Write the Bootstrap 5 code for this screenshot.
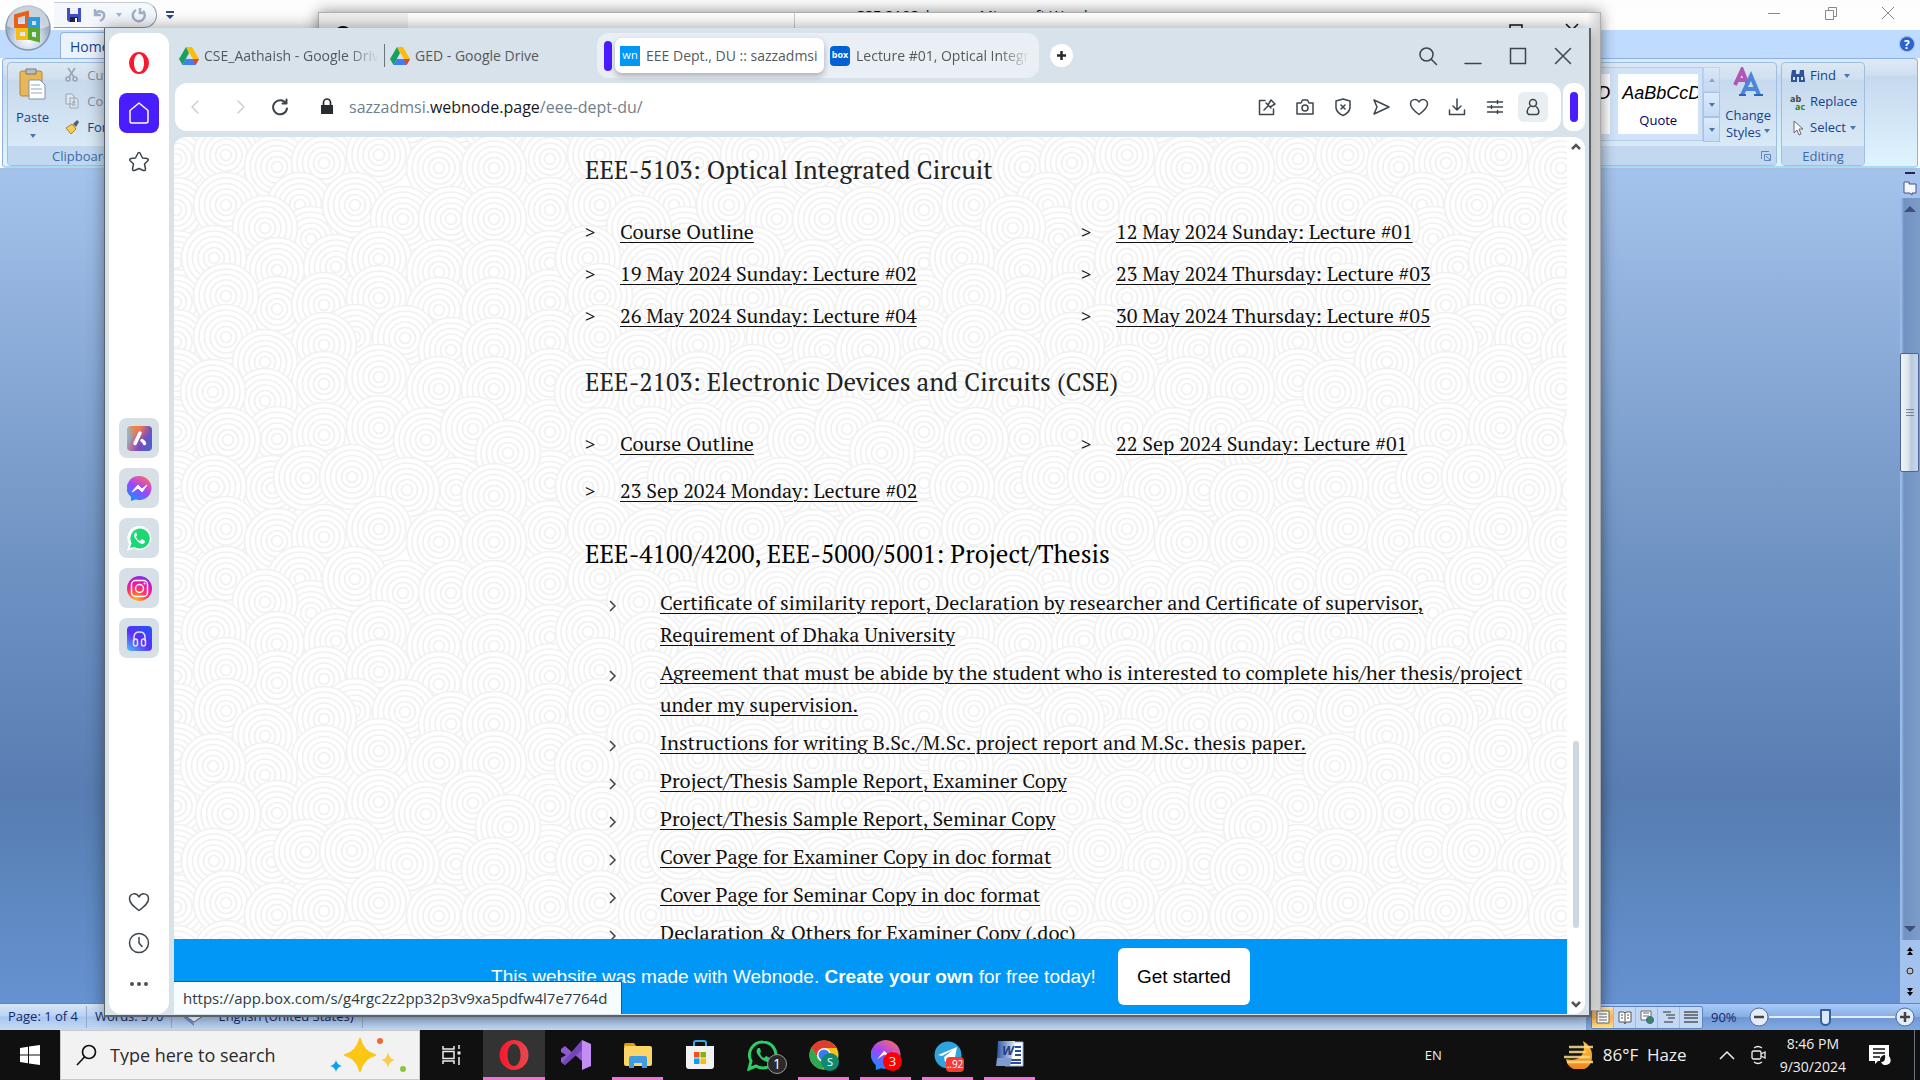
<!DOCTYPE html>
<html lang="en">
<head>
<meta charset="utf-8">
<meta name="viewport" content="width=device-width, initial-scale=1">
<title>EEE Dept., DU :: sazzadmsi</title>
<link href="https://cdn.jsdelivr.net/npm/bootstrap@5.3.0/dist/css/bootstrap.min.css" rel="stylesheet">
<style>
html, body { height: 100%; overflow: hidden; }
body { font-family: "Open Sans", "Noto Sans", sans-serif; font-size: 14px; line-height: 20px; background: #000; }
button, a { color: inherit; }
button { border: 0; background: none; padding: 0; font: inherit; }
svg { display: block; flex: none; }
.ui-svg { fill: none; stroke: #3d464d; stroke-width: 1.5; stroke-linecap: round; stroke-linejoin: round; }
.desktop { min-height: 0; }

/* Word window */
.wordwin { inset: 0; background: #fff; }
.w-title { height: 30px; background: linear-gradient(#fdfdfd, #fff); }
.w-doc { left: 855px; top: 5px; font-size: 15px; color: #111; white-space: nowrap; }
.qat { border: 1px solid #8e98a8; border-left: 0; border-top-color: #c5ccd6; border-radius: 0 14px 14px 0; height: 26px; width: 103px; margin: 2px 0 0 54px; background: #f4f7fb; padding-left: 8px; gap: 9px; }
.orb { left: 4px; top: 4px; }
.w-ctl { gap: 43px; padding-right: 25px; }
.w-tabs { height: 28px; background: #bfdbff; }
.w-tab { margin-left: 60px; margin-top: 2px; width: 70px; height: 27px; background: #eaf2fd; border: 1px solid #8db2e3; border-bottom: 0; border-radius: 4px 4px 0 0; color: #15428b; padding: 4px 0 0 9px; }
.ribbon { height: 110px; margin: 0 2px; border: 1px solid #8db2e3; border-bottom: 2px solid #a5dcf5; border-radius: 4px; background: linear-gradient(#dfeaf7 0, #d0dff0 16px, #c6d8ee 17px, #e0f4ff 100%); color: #15428b; font-size: 13px; line-height: 17px; }
.rgroup { height: 104px; margin-top: 3px; border: 1px solid #9dbfe2; border-radius: 4px; background: linear-gradient(#dce7f3 0, #d0dfef 16px, #c7d9ed 17px, #d9e9f6 84px); overflow: hidden; white-space: nowrap; }
.rbody { height: 83px; flex: none; }
.rlabel { height: 19px; line-height: 20px; flex: none; background: #c1d8f0; color: #3e6aaa; text-align: center; }
.dim { color: #8a8d91; }
.gal { height: 74px; background: #d0e2f7; border: 1px solid #b6cde9; }
.galcell { width: 80px; height: 60px; background: #fff; overflow: hidden; color: #000060; }
.galcell i { font: italic 18px/38px "Liberation Sans", Arial, sans-serif; color: #000; white-space: nowrap; }
.galbtn { height: 25px; width: 17px; border: 1px solid #a9c4e8; background: linear-gradient(#dceafb, #c4daf5); }
.tri { width: 0; height: 0; border: 3px solid transparent; border-top: 4px solid #4a77b4; border-bottom: 0; display: inline-block; }
.w-space { background: linear-gradient(#a4c3ec 0, #9bbae4 8%, #7094c4 45%, #587db2 75%, #5b85bb 84%, #6692d2 100%); border-top: 2px solid #a9bfdd; min-height: 0; }
.w-scroll { width: 20px; background: #a4c2ee; }
.w-track { background: linear-gradient(90deg, #9dbdeb 1px, #7193c2 4px, #7c9cc8); }
.w-thumb { left: 0; right: 1px; top: 155px; height: 119px; border: 1px solid #4c6598; border-radius: 2px; background: linear-gradient(90deg, #f2f5f8, #dfe6ee 40%, #b9c9dd 60%, #c9d7ea); }
.w-status { height: 27px; border-top: 1px solid #5d87c4; background: linear-gradient(#d9e6f6, #b9d3f4 45%, #a8c5ee 50%, #c5dbf5); color: #15286b; font-size: 13px; }
.w-status .seg { border-right: 1px solid #8fa9cf; height: 22px; }
.w-zoom { background: linear-gradient(#a9cbfa, #88aee6 48%, #6f97d4 52%, #83a9e0); border-left: 1px solid #7c9bc8; width: 334px; }
.views { border: 1px solid #5e84bd; border-radius: 2px; height: 23px; background: #c3d8f5; }
.views button { width: 22px; height: 21px; border-right: 1px solid #9fbce6; display: flex; align-items: center; justify-content: center; }
.views .on { background: linear-gradient(#ffe5a8, #fbb04a 50%, #ffe08c); }
.zoomline input { width: 126px; height: 20px; appearance: none; background: linear-gradient(#e3eefc, #e3eefc) center / 100% 2px no-repeat; margin: 0; }
.zoomline input::-webkit-slider-thumb { appearance: none; width: 11px; height: 17px; background: #dbe8fa; border: 2px solid #365f9e; border-radius: 1px 1px 6px 6px; }

/* window behind the browser */
.backwin { left: 318px; right: 319px; top: 12px; bottom: 19px; background: linear-gradient(90deg, #fff 99%, #d8d8d8); border: 1px solid #b0b0b0; box-shadow: 0 0 14px rgba(0,0,0,.45); overflow: hidden; }

/* browser */
.browser { left: 104px; right: 329px; top: 28px; bottom: 13px; background: #d8e2ea; border: solid #5c6268; border-width: 0 2px 2px 1px; box-shadow: 0 0 16px rgba(0,0,0,.4); padding: 5px 4px 1px 4px; }
.side { width: 60px; background: #fff; border-radius: 12px; padding: 18px 0 20px; }
.side .homebtn { width: 40px; height: 40px; border-radius: 8px; background: #4a1dff; }
.side .appbtn { width: 40px; height: 40px; border-radius: 8px; background: #d6e0e6; }
.tabbar { height: 50px; margin-left: 5px; color: #55595d; font-size: 14px; }
.tab-t { overflow: hidden; white-space: nowrap; }
.fade-r { -webkit-mask-image: linear-gradient(90deg, #000 82%, transparent); mask-image: linear-gradient(90deg, #000 82%, transparent); }
.tgroup { height: 45px; width: 442px; border-radius: 12px; background: #e9eff4; padding-left: 7px; margin-left: 52px; }
.purple { width: 8px; height: 30px; border-radius: 4px; background: #4a1dff; }
.tactive { width: 209px; height: 35px; margin-left: 3px; border-radius: 7px; background: #fff; box-shadow: 0 3px 6px rgba(0,0,0,.28); padding-left: 5px; gap: 6px; }
.fav { width: 20px; height: 20px; color: #fff; font-size: 11px; line-height: 18px; text-align: center; flex: none; }
.toolrow { height: 48px; margin-left: 6px; gap: 2px; }
.addr { background: #fff; border-radius: 12px; padding: 0 13px 0 11px; }
.url { font-size: 16px; color: #6f7f8c; }
.url b { font-weight: 400; color: #16191c; }
.acts { gap: 16px; }
.acts button { width: 22px; height: 30px; display: flex; align-items: center; justify-content: center; }
.acts .prof { width: 30px; background: #e9eef1; border-radius: 6px; margin-left: -4px; }
.pill { width: 22px; background: #fff; border-radius: 9px; }
.view { margin: 6px 0 0 5px; border-radius: 12px 12px 12px 0; background: #fff; overflow: hidden; min-height: 0; }
.site { min-width: 0; overflow: hidden; }
.rings { inset: 0; width: 100%; height: 100%; }
.doc { font-family: "PT Serif", "Liberation Serif", serif; font-size: 20px; line-height: 32px; color: #111; padding: 15px 40px 0 411px; position: relative; }
.doc h2 { font-size: 25px; line-height: 36px; font-weight: 400; color: #222; margin: 0 0 28px; }
.doc a { text-decoration: underline; text-decoration-thickness: 1px; text-underline-offset: 3px; color: #111; }
.doc .cols { --bs-gutter-x: 50px; row-gap: 10px; margin-bottom: 32px; }
.doc .cols.wide { row-gap: 15px; margin-bottom: 29px; }
.doc .cols > div { display: flex; }
.doc .gt { width: 35px; flex: none; font: 18px/32px "Open Sans", sans-serif; }
.doc ul { margin: -13px 0 0; padding: 0; list-style: none; }
.doc li { display: flex; margin-bottom: 6px; padding-left: 24px; color: #000; }
.doc li svg { margin: 13px 43px 0 0; }
.banner { left: 0; right: 0; bottom: 0; height: 75px; background: #0097f6; color: #fff; font: 19px/24px "Liberation Sans", Arial, sans-serif; gap: 22px; }
.banner button { width: 132px; height: 57px; border-radius: 6px; background: #fff; color: #000; }
.vscroll { width: 18px; flex: none; background: #fff; padding: 6px 0; }
.vthumb { right: 6px; width: 6px; top: 604px; bottom: 86px; background: #ccd8df; border-radius: 3px; }
.hoverurl { left: 69px; bottom: 1px; height: 33px; background: #f7fcff; border: 1px solid #1a5d94; border-left: 0; border-bottom: 0; padding: 0 14px 0 9px; font-size: 15px; color: #333a40; }

/* taskbar */
.taskbar { height: 50px; background: #101010; color: #eee; flex: none; }
.startbtn { width: 60px; height: 50px; }
.searchbox { width: 360px; height: 50px; background: #f2f2f2; border: 1px solid #c9c9c9; padding-left: 15px; }
.searchbox input { border: 0; background: none; outline: 0; font-size: 18px; color: #222; width: 185px; padding: 0; margin-left: 13px; }
.searchbox input::placeholder { color: #2a2a2a; opacity: 1; }
.tk { width: 62px; height: 50px; display: flex; align-items: center; justify-content: center; position: relative; }
.tk.run::after { content: ""; position: absolute; left: 5px; right: 6px; bottom: 0; height: 3px; background: #f272dd; }
.tk.cur { background: #333; }
.tk.cur::after { left: 0; right: 0; }
.bdg { border-radius: 10px; font-size: 11px; line-height: 18px; text-align: center; color: #fff; height: 18px; min-width: 18px; }
.tray { font-size: 14px; }
</style>
<script src="https://cdn.jsdelivr.net/npm/bootstrap@5.3.0/dist/js/bootstrap.bundle.min.js"></script>
</head>
<body class="d-flex flex-column">

<main class="desktop flex-grow-1 position-relative overflow-hidden">

  <!-- Word -->
  <section class="wordwin position-absolute d-flex flex-column">
    <div class="w-title d-flex align-items-start position-relative">
      <div class="qat d-flex align-items-center">
        <svg width="16" height="16" style="margin-left:4px"><path d="M1 1h14v14H3l-2-2z" fill="#3f4fc4"/><path d="M4 1h8v6H4z" fill="#eef"/><path d="M4 10h8v5H4z" fill="#223"/><path d="M9 11h2v4H9z" fill="#fff"/></svg>
        <svg width="16" height="16" fill="none" stroke="#9fb0c8" stroke-width="2.5"><path d="M4 2v6h6M4 8c3-6 10-4 9 2-1 2-2 3-4 4"/></svg>
        <span class="tri opacity-50"></span>
        <svg width="16" height="16" fill="none" stroke="#9fb0c8" stroke-width="2.5"><path d="M5 3a6 6 0 1 0 7 1M9 1v5h5"/></svg>
      </div>
      <svg class="mt-2 ms-2" width="10" height="14"><path d="M1 3h8v2H1zM1 7h8l-4 4z" fill="#2a4a84"/></svg>
      <div class="w-doc position-absolute">CSE 2103_lnco... - Microsoft Word</div>
      <div class="w-ctl ms-auto d-flex align-items-center pt-1">
        <button aria-label="Minimize"><svg width="14" height="18" stroke="#888"><path d="M1 9.500h12"/></svg></button>
        <button aria-label="Restore"><svg width="14" height="18" stroke="#888" fill="none"><path d="M1.500 6.500h8v9h-8zM4.500 6v-2.500h8v9H10"/></svg></button>
        <button aria-label="Close"><svg width="14" height="18" stroke="#888"><path d="M1 3l12 12M13 3L1 15"/></svg></button>
      </div>
    </div>
    <div class="w-tabs d-flex align-items-start">
      <div class="w-tab">Home</div>
      <svg class="ms-auto me-1 mt-1" width="18" height="20" ><circle cx="9" cy="10" r="7.500" fill="#2c63c9" stroke="#9cb8e8"/><text x="6" y="15" fill="#fff" font-size="12" font-weight="700">?</text></svg>
    </div>
    <svg class="orb position-absolute" width="48" height="48" viewBox="0 0 48 48">
      <defs><radialGradient id="orbg" cy=".75"><stop offset="0" stop-color="#fff"/><stop offset=".6" stop-color="#cbd8e8"/><stop offset="1" stop-color="#9dadc2"/></radialGradient></defs>
      <circle cx="24" cy="24" r="22" fill="url(#orbg)" stroke="#8696ad" stroke-width="1.500"/><path d="M3 22a21 21 0 0 1 42 0c-12 5-30 5-42 0z" fill="#fff" opacity=".45"/>
      <g fill="none" stroke-width="4"><path d="M12 12l11-3v13H12z" stroke="#e8601c"/><path d="M26 15h8v8h-8z" stroke="#2f9bdc"/><path d="M14 26h9v8h-9z" stroke="#f7bd14"/><path d="M26 26h8v10l-8-2z" stroke="#5aa832"/></g>
    </svg>
    <div class="ribbon d-flex justify-content-between">
      <div class="rgroup ms-1 d-flex flex-column" style="width:190px">
        <div class="d-flex rbody">
          <button class="d-flex flex-column align-items-center ms-2">
            <svg width="30" height="34" class="mt-1 mb-2"><rect x="2" y="4" width="22" height="25" rx="2" fill="#e7b75a" stroke="#b58432"/><path d="M8 2h10v5H8z" fill="#b8bec6" stroke="#777"/><path d="M11 13h11l5 5v14H11z" fill="#fff" stroke="#7f92ad"/><path d="M13 18h9M13 22h11M13 26h11" stroke="#8fa5c5"/></svg>
            <span>Paste</span><span class="tri mt-2"></span>
          </button>
          <div class="d-flex flex-column ms-3" style="gap:9px">
            <button class="dim d-flex gap-2 mt-1"><svg width="14" height="16" fill="none" stroke="#98a5b5" stroke-width="1.600"><path d="M3 1l6 9M10 1L4 10"/><circle cx="3" cy="12" r="2"/><circle cx="10" cy="12" r="2"/></svg>Cut</button>
            <button class="dim d-flex gap-2"><svg width="14" height="16" fill="#dfe6ee" stroke="#98a5b5"><path d="M1 1h6l2 2v8H1zM5 5h6l2 2v8H5z"/><path d="M7 9h4M7 12h4"/></svg>Copy</button>
            <button class="d-flex gap-2"><svg width="14" height="16"><path d="M1 9l6-4 4 5-5 5z" fill="#f3cf58" stroke="#a98525"/><path d="M8 5l4-4 2 2-3 5z" fill="#555a75"/></svg>Format Painter</button>
          </div>
        </div>
        <div class="rlabel text-start" style="padding-left:44px">Clipboard</div>
      </div>
      <div class="d-flex gap-1" style="margin-right:52px">
        <div class="rgroup d-flex flex-column" style="width:270px">
          <div class="d-flex rbody justify-content-end">
            <div class="gal d-flex align-items-center gap-2 mt-1 ps-1" style="width:196px;padding-right:4px">
              <div class="galcell ms-auto text-end"><i>AaBbCcD</i></div>
              <div class="galcell text-center"><div class="text-start ps-1 overflow-hidden" style="height:38px"><i>AaBbCcD</i></div>Quote</div>
            </div>
            <div class="mt-1">
              <div class="galbtn d-flex align-items-center justify-content-center opacity-50"><span class="tri" style="rotate:180deg"></span></div>
              <div class="galbtn d-flex align-items-center justify-content-center"><span class="tri"></span></div>
              <div class="galbtn d-flex align-items-center justify-content-center"><span class="tri"></span></div>
            </div>
            <button class="d-flex flex-column align-items-center" style="width:56px">
              <svg class="mt-1 mb-2" width="32" height="32" fill="none" stroke-width="4"><path d="M3 18L10 3l6 15M6 13h8" stroke="#b056b5"/><path d="M10 28L19 9l8 19M13 22h11" stroke="#4d86d8"/><path d="M7 28h7M22 28h9" stroke="#2f65b8" stroke-width="2"/></svg>
              <span>Change</span><span>Styles <span class="tri mb-1"></span></span>
            </button>
          </div>
          <div class="rlabel d-flex justify-content-end pe-1 pt-1"><svg width="12" height="12" fill="none" stroke="#5f85ba"><path d="M1.500 9V1.500H9M4.500 4.500h6v6h-6zM6 6l4 4"/></svg></div>
        </div>
        <div class="rgroup d-flex flex-column" style="width:84px">
          <div class="d-flex flex-column rbody ps-2" style="gap:9px;padding-top:4px">
            <button class="d-flex gap-1 align-items-center"><svg width="16" height="16" fill="#2f5596"><path d="M2 2h4v4l1 2v6H1V8zM10 2h4v4l1 6v2H9V8zM6 6h4v3H6z"/><path d="M3 9h2v3H3zM11 9h2v3h-2z" fill="#cfe0f5"/></svg>Find <span class="tri ms-1"></span></button>
            <button class="d-flex gap-1 align-items-center"><svg width="16" height="16"><text x="0" y="8" font-size="9" font-weight="700" fill="#444">ab</text><text x="5" y="16" font-size="9" font-weight="700" fill="#238a23">ac</text></svg>Replace</button>
            <button class="d-flex gap-1 align-items-center"><svg width="16" height="16"><path d="M4 1v12l3-3 2 5 2-1-2-5h4z" fill="#fff" stroke="#667"/></svg>Select <span class="tri"></span></button>
          </div>
          <div class="rlabel">Editing</div>
        </div>
      </div>
    </div>
    <div class="w-space flex-grow-1 d-flex justify-content-end">
      <div class="w-scroll d-flex flex-column align-items-center">
        <svg width="18" height="28"><path d="M4 3h10" stroke="#222a44" stroke-width="2"/><path d="M3 12h5v2h7v9h-4v2l-2-2H3z" fill="#f4f6ff" stroke="#4a5578"/></svg>
        <div class="w-track position-relative flex-grow-1 w-100 d-flex flex-column justify-content-between align-items-center py-2">
          <svg width="12" height="6"><path d="M0 6l6-6 6 6z" fill="#3e4f78"/></svg>
          <div class="w-thumb position-absolute d-flex align-items-center justify-content-center"><svg width="8" height="8" stroke="#76849a"><path d="M0 .5h8M0 3.500h8M0 6.500h8"/></svg></div>
          <svg width="12" height="6"><path d="M0 0l6 6 6-6z" fill="#3e4f78"/></svg>
        </div>
        <svg width="18" height="63"><path d="M9 7l3 4H6zM9 11l3 4H6zM9 56l3-4H6zM9 52l3-4H6z" fill="#000"/><circle cx="9" cy="31" r="3" fill="#bbb" stroke="#222"/></svg>
      </div>
    </div>
    <div class="w-status d-flex">
      <div class="d-flex align-items-center flex-grow-1 ps-2">
        <span class="seg pe-2">Page: 1 of 4</span><span class="seg px-2">Words: 570</span>
        <span class="seg d-flex pe-2"><svg class="mx-2" width="30" height="22"><path d="M4 9l10-5 12 4-12 8z" fill="#fff" stroke="#50648c"/><path d="M4 9l10 8v3L4 12z" fill="#6b8fd0"/></svg>English (United States)</span>
      </div>
      <div class="w-zoom d-flex align-items-center">
        <div class="views d-flex ms-1">
          <button class="on" aria-label="Print layout"><svg width="14" height="14" stroke="#666" fill="#fff"><path d="M1 1h12v12H1zM3 4h8M3 7h8M3 10h8"/></svg></button>
          <button aria-label="Reading"><svg width="14" height="14" stroke="#555" fill="#fff"><path d="M1 2h5l1 1 1-1h5v10H8l-1 2-1-2H1zM7 3v10M3 5h2M3 8h2M9 5h2M9 8h2"/></svg></button>
          <button aria-label="Web layout"><svg width="14" height="14" stroke="#666" fill="#fff"><path d="M1 1h10v9H1zM3 3h6M3 6h6"/><circle cx="10" cy="10" r="3.500" fill="#3c8a52" stroke="#3465b0"/></svg></button>
          <button aria-label="Outline"><svg width="14" height="14" stroke="#666" stroke-width="1.500"><path d="M1 2h8M4 5h9M6 8h7M2 12h9"/></svg></button>
          <button class="border-0" aria-label="Draft"><svg width="14" height="14" stroke="#555" stroke-width="1.500"><path d="M0 2h14M0 5h14M0 8h14M0 12h14"/></svg></button>
        </div>
        <span class="ms-2">90%</span>
        <div class="zoomline d-flex align-items-center ms-2 ps-1">
          <svg width="20" height="20"><circle cx="10" cy="10" r="9" fill="#e3ecf8" stroke="#4d6ea8"/><path d="M5 10h10" stroke="#444" stroke-width="2.500"/></svg>
          <input type="range" min="10" max="190" value="90" aria-label="Zoom">
          <svg width="20" height="20"><circle cx="10" cy="10" r="9" fill="#e3ecf8" stroke="#4d6ea8"/><path d="M5 10h10M10 5v10" stroke="#444" stroke-width="2.500"/></svg>
        </div>
      </div>
    </div>
  </section>

  <!-- second window -->
  <section class="backwin position-absolute d-flex">
    <svg width="478" height="20"><path d="M0 0h89v20H0z" fill="#f0f0f0"/><ellipse cx="24" cy="20" rx="8" ry="7" fill="#000"/><path d="M475.500 0v20" stroke="#ccc"/></svg>
    <svg class="ms-auto" width="92" height="30" fill="none" stroke="#111" stroke-width="1.500"><path d="M2 12h12v12H2zM58 11l12 12M70 11L58 23"/></svg>
  </section>

  <!-- Opera -->
  <section class="browser position-absolute d-flex">
    <nav class="side d-flex flex-column align-items-center flex-shrink-0" aria-label="Sidebar">
      <svg width="22" height="24" viewBox="0 0 22 24"><path fill-rule="evenodd" fill="#f8192f" d="M11 1a10 11 0 1 0 0 22a10 11 0 1 0 0-22M11 3c3 0 5 4 5 9s-2 9-5 9-5-4-5-9 2-9 5-9"/></svg>
      <button class="homebtn d-flex align-items-center justify-content-center" style="margin-top:18px" aria-label="Home"><svg width="22" height="24" fill="none" stroke="#fff" stroke-width="1.500" stroke-linejoin="round"><path d="M2 9.500L11 2l9 7.500V20q0 2-2 2H4q-2 0-2-2z"/></svg></button>
      <button style="margin-top:18px" aria-label="Bookmarks"><svg class="ui-svg" width="22" height="22"><path d="M11 1.500q1 0 1.500 1.500l2 4 4.500.5q2 .5 1 2l-3.500 3.500 1 5q0 2-2 1.500L11 17.500 6.500 19.500q-2 .5-2-1.500l1-5L2 9.500q-1-1.500 1-2L7.500 7l2-4Q10 1.500 11 1.500z"/></svg></button>
      <div class="d-flex flex-column" style="gap:10px;margin-top:245px">
        <button class="appbtn d-flex align-items-center justify-content-center" aria-label="Aria"><svg width="25" height="25"><defs><linearGradient id="ga" x1="0" y1=".3" x2="1" y2=".7"><stop offset="0" stop-color="#6fd6e8"/><stop offset=".3" stop-color="#b87a9a"/><stop offset=".6" stop-color="#7a4bc0"/><stop offset="1" stop-color="#4b62c8"/></linearGradient><radialGradient id="gb" cx=".4" cy="0" r=".6"><stop offset="0" stop-color="#ff7a3d"/><stop offset="1" stop-color="#ff7a3d" stop-opacity="0"/></radialGradient></defs><rect width="25" height="25" rx="4" fill="url(#ga)"/><rect width="25" height="25" rx="4" fill="url(#gb)"/><path d="M13 7L8 17.500M15 14.500q2 1 2.500 3" stroke="#fff" stroke-width="3.500" stroke-linecap="round" fill="none"/></svg></button>
        <button class="appbtn d-flex align-items-center justify-content-center" aria-label="Messenger"><svg width="25" height="25"><defs><linearGradient id="gm" x1=".2" y1="1" x2=".8" y2="0"><stop offset="0" stop-color="#0a95ff"/><stop offset=".5" stop-color="#a044ff"/><stop offset="1" stop-color="#ff6968"/></linearGradient></defs><path d="M12.500 0a12.500 12 0 1 1-4 23.500L4 25v-4A12.500 12 0 0 1 12.500 0" fill="url(#gm)"/><path d="M5 16l6-7 4 4 5-4-5 7-4-4z" fill="#fff" stroke="#fff"/></svg></button>
        <button class="appbtn d-flex align-items-center justify-content-center" aria-label="WhatsApp"><svg width="25" height="25"><path d="M12.500 0a12 12 0 1 1-6 22.500L0 25l2-7A12 12 0 0 1 12.500 0" fill="#fff"/><path d="M12.500 2.500a10 10 0 1 1-5 18.500L3 22l1.500-5a10 10 0 0 1 8-14.500" fill="#1ad975"/><path d="M8 7q-2 2 0 5 3 5 7 6 3 0 3-3l-3-2-2 2q-3-1-4-4l1-2-1-3z" fill="#fff"/></svg></button>
        <button class="appbtn d-flex align-items-center justify-content-center" aria-label="Instagram"><svg width="25" height="25"><defs><radialGradient id="gi" cx=".35" cy="1" r="1"><stop offset="0" stop-color="#ffc21a"/><stop offset=".45" stop-color="#ff3a5c"/><stop offset=".75" stop-color="#f010b0"/><stop offset="1" stop-color="#8a2be8"/></radialGradient></defs><circle cx="12.500" cy="12.500" r="12.500" fill="url(#gi)"/><g fill="none" stroke="#fff" stroke-width="1.500"><rect x="4.500" y="4.500" width="16" height="16" rx="4"/><circle cx="12.500" cy="12.500" r="4"/></g><circle cx="17.500" cy="7.500" r="1" fill="#fff"/></svg></button>
        <button class="appbtn d-flex align-items-center justify-content-center" aria-label="Player"><svg width="25" height="25"><defs><linearGradient id="gp" x1="0" y1="1" x2=".8" y2="0"><stop offset="0" stop-color="#4bc5ff"/><stop offset=".5" stop-color="#5a30f8"/><stop offset="1" stop-color="#2a50f5"/></linearGradient></defs><rect width="25" height="25" rx="4" fill="url(#gp)"/><path d="M7 15v-4q0-5 5.500-5T18 11v4" fill="none" stroke="#e8e0ff" stroke-width="1.500"/><rect x="6.500" y="13" width="4" height="7" rx="2" fill="none" stroke="#e8e0ff" stroke-width="1.500"/><rect x="14.500" y="13" width="4" height="7" rx="2" fill="none" stroke="#e8e0ff" stroke-width="1.500"/></svg></button>
      </div>
      <div class="mt-auto d-flex flex-column align-items-center" style="gap:20px">
        <svg class="ui-svg" width="22" height="20"><path d="M11 18.500C5 14 1.500 11 1.500 7c0-6 7-7 9.500-2 2.500-5 9.500-4 9.500 2 0 4-3.500 7-9.500 11.500z"/></svg>
        <svg class="ui-svg" width="22" height="22"><circle cx="11" cy="11" r="9.500"/><path d="M11 5.500V11l3 3.500"/></svg>
        <svg width="22" height="20" fill="#4a5258"><circle cx="4" cy="10" r="2"/><circle cx="11" cy="10" r="2"/><circle cx="18" cy="10" r="2"/></svg>
      </div>
    </nav>

    <div class="flex-grow-1 d-flex flex-column" style="min-width:0">
      <div class="tabbar d-flex">
        <div class="d-flex align-items-center" style="height:45px">
          <svg width="20" height="18" style="margin-left:5px;margin-right:5px"><use href="#gdrive"/></svg>
          <span class="tab-t fade-r" style="width:175px">CSE_Aathaish - Google Drive</span>
          <span class="border-start border-secondary" style="height:23px;margin:0 5px 0 5px"></span>
          <svg width="20" height="18" style="margin-right:5px" viewBox="0 0 20 18"><g id="gdrive"><path d="M7 0h6l7 12h-6z" fill="#fdbc08"/><path d="M7 0l3 6-6.500 12L0 12z" fill="#18a05c"/><path d="M6.500 12H20l-3.500 6h-13z" fill="#3f7fee"/><path d="M14 12h6l-3.500 6z" fill="#e8432f"/></g></svg>
          <span class="tab-t" style="width:130px">GED - Google Drive</span>
        </div>
        <div class="tgroup d-flex align-items-center">
          <span class="purple"></span>
          <div class="tactive d-flex align-items-center"><span class="fav" style="background:#0097f6">wn</span><span class="tab-t">EEE Dept., DU :: sazzadmsi</span></div>
          <span class="fav rounded-1 fw-bold" style="background:#0061d5;margin:0 6px;font-size:9px">box</span>
          <span class="tab-t fade-r" style="width:174px">Lecture #01, Optical Integrated</span>
        </div>
        <button class="ms-2 mt-2 align-self-start" aria-label="New tab" style="padding:3px"><svg width="23" height="23"><circle cx="11.500" cy="11.500" r="11.500" fill="#fff"/><path d="M11.500 7v9M7 11.500h9" stroke="#23282c" stroke-width="2.500"/></svg></button>
        <div class="ms-auto d-flex align-items-center" style="height:45px;gap:25px;padding-right:12px">
          <button aria-label="Search tabs"><svg class="ui-svg" width="20" height="20"><circle cx="8.500" cy="8.500" r="6.500"/><path d="M13.500 13.500l5 5"/></svg></button>
          <button aria-label="Minimize"><svg class="ui-svg" width="20" height="20"><path d="M2 17.500h16"/></svg></button>
          <button aria-label="Maximize"><svg class="ui-svg" width="20" height="20"><path d="M2.500 2.500h15v15h-15z" stroke-linejoin="miter"/></svg></button>
          <button aria-label="Close"><svg class="ui-svg" width="20" height="20"><path d="M2.500 2.500l15 15M17.500 2.500l-15 15"/></svg></button>
        </div>
      </div>
      <div class="toolrow d-flex">
        <div class="addr flex-grow-1 d-flex align-items-center">
          <button aria-label="Back"><svg class="ui-svg opacity-25" width="18" height="20"><path d="M12 4l-6 6 6 6"/></svg></button>
          <button aria-label="Forward" style="margin-left:28px"><svg class="ui-svg opacity-25" width="18" height="20"><path d="M6 4l6 6-6 6"/></svg></button>
          <button aria-label="Reload" style="margin-left:20px"><svg class="ui-svg" width="20" height="20"><path stroke-width="2" d="M16 6.500A7 7 0 1 0 17 11.500M16.500 2.500v4h-4"/></svg></button>
          <svg style="margin-left:30px" width="14" height="20"><path d="M1 8h12v9H1z" fill="#262c31"/><path d="M3.500 8V5.500a3.500 3.500 0 0 1 7 0V8" fill="none" stroke="#262c31" stroke-width="1.700"/></svg>
          <div class="url" style="margin-left:15px">sazzadmsi.<b>webnode.page</b>/eee-dept-du/</div>
          <div class="acts ms-auto d-flex align-items-center">
            <button aria-label="Notes"><svg class="ui-svg" width="20" height="20"><path d="M8 3.500H2.500v14h14V12M7 13l4-4M9 6l5 5M11 8l3-5 4 4-5 3z"/></svg></button>
            <button aria-label="Snapshot"><svg class="ui-svg" width="20" height="20"><path d="M2 6h4l1.500-3h5L14 6h4v11H2z"/><circle cx="10" cy="11" r="3"/></svg></button>
            <button aria-label="Blocker"><svg class="ui-svg" width="20" height="20"><path d="M10 2l7 2v7q-1 5-7 7.500Q4 16 3 11V4zM8 8l4 4M12 8l-4 4"/></svg></button>
            <button aria-label="Send"><svg class="ui-svg" width="20" height="20"><path d="M3 3l15 7-15 7 3-7z"/></svg></button>
            <button aria-label="Favourite"><svg class="ui-svg" width="20" height="20"><path d="M10 17.500C4 13 1.500 10 1.500 7c0-5 6.500-6 8.500-2 2-4 8.500-3 8.500 2 0 3-2.500 6-8.500 10.500z"/></svg></button>
            <button aria-label="Downloads"><svg class="ui-svg" width="20" height="20"><path d="M10 2v10M6 9l4 4 4-4M2.500 13v4.500h15V13"/></svg></button>
            <button aria-label="Setup"><svg class="ui-svg" width="20" height="20"><path d="M2.500 5h15M2.500 10h15M2.500 15h15M12.500 3.500v3M6.500 8.500v3M12.500 13.500v3"/></svg></button>
            <button class="prof" aria-label="Profile"><svg class="ui-svg" width="20" height="20"><circle cx="10" cy="6" r="3.500"/><path d="M7 9.500c-3 2-4 7-1 8h8c3-1 2-6-1-8"/></svg></button>
          </div>
        </div>
        <div class="pill d-flex align-items-center justify-content-center"><span class="purple"></span></div>
      </div>

      <div class="view flex-grow-1 d-flex position-relative">
        <div class="site flex-grow-1 position-relative">
          <svg class="rings position-absolute" aria-hidden="true"><defs><g id="ring" fill="none" stroke="#f1f1f1" stroke-width="1.700"><circle r="32.500" fill="#fff"/><circle r="27"/><circle r="21.500"/><circle r="16"/><circle r="10.500"/><circle r="5.500"/></g><pattern id="tile" patternUnits="userSpaceOnUse" x="1" y="9" width="374" height="374"></pattern></defs><rect width="100%" height="100%" fill="url(#tile)"/></svg>
          <div class="doc">
            <h2>EEE-5103: Optical Integrated Circuit</h2>
            <div class="row cols">
              <div class="col-6"><span class="gt">&gt;</span><a href="#">Course Outline</a></div>
              <div class="col-6"><span class="gt">&gt;</span><a href="#">12 May 2024 Sunday: Lecture #01</a></div>
              <div class="col-6"><span class="gt">&gt;</span><a href="#">19 May 2024 Sunday: Lecture #02</a></div>
              <div class="col-6"><span class="gt">&gt;</span><a href="#">23 May 2024 Thursday: Lecture #03</a></div>
              <div class="col-6"><span class="gt">&gt;</span><a href="#">26 May 2024 Sunday: Lecture #04</a></div>
              <div class="col-6"><span class="gt">&gt;</span><a href="#">30 May 2024 Thursday: Lecture #05</a></div>
            </div>
            <h2>EEE-2103: Electronic Devices and Circuits (CSE)</h2>
            <div class="row cols wide">
              <div class="col-6"><span class="gt">&gt;</span><a href="#">Course Outline</a></div>
              <div class="col-6"><span class="gt">&gt;</span><a href="#">22 Sep 2024 Sunday: Lecture #01</a></div>
              <div class="col-6"><span class="gt">&gt;</span><a href="#">23 Sep 2024 Monday: Lecture #02</a></div>
            </div>
            <h2 class="text-black">EEE-4100/4200, EEE-5000/5001: Project/Thesis</h2>
            <ul id="papers">
              <li><a href="#">Certificate of similarity report, Declaration by researcher and Certificate of supervisor,<br>Requirement of Dhaka University</a></li>
              <li><a href="#">Agreement that must be abide by the student who is interested to complete his/her thesis/project under my supervision.</a></li>
              <li><a href="#">Instructions for writing B.Sc./M.Sc. project report and M.Sc. thesis paper.</a></li>
              <li><a href="#">Project/Thesis Sample Report, Examiner Copy</a></li>
              <li><a href="#">Project/Thesis Sample Report, Seminar Copy</a></li>
              <li><a href="#">Cover Page for Examiner Copy in doc format</a></li>
              <li><a href="#">Cover Page for Seminar Copy in doc format</a></li>
              <li><a href="#">Declaration &amp; Others for Examiner Copy (.doc)</a></li>
            </ul>
          </div>
          <div class="banner position-absolute d-flex align-items-center justify-content-center">
            <span>This website was made with Webnode. <b>Create your own</b> for free today!</span>
            <button>Get started</button>
          </div>
        </div>
        <div class="vscroll d-flex flex-column align-items-center justify-content-between">
          <svg width="10" height="7" fill="none" stroke="#555" stroke-width="2.500"><path d="M1 6l4-4 4 4"/></svg>
          <svg width="10" height="7" fill="none" stroke="#555" stroke-width="2.500"><path d="M1 1l4 4 4-4"/></svg>
        </div>
        <div class="vthumb position-absolute"></div>
      </div>
    </div>
    <div class="hoverurl position-absolute d-flex align-items-center">https://app.box.com/s/g4rgc2z2pp32p3v9xa5pdfw4l7e7764d</div>
  </section>
</main>

<footer class="taskbar d-flex align-items-center">
  <button class="startbtn d-flex align-items-center justify-content-center" aria-label="Start"><svg width="20" height="20" fill="#fff"><path d="M0 3l8-1.200V9.500H0zM9 1.600L20 0v9.500H9zM0 10.500h8v7.700L0 17zM9 10.500h11V20L9 18.400z"/></svg></button>
  <label class="searchbox d-flex align-items-center"><svg width="21" height="22" fill="none" stroke="#111" stroke-width="1.700"><circle cx="13" cy="8" r="6.500"/><path d="M8.500 13L1 21"/></svg>
    <input type="text" placeholder="Type here to search">
    <svg class="ms-auto me-2" width="82" height="36"><path d="M31 2q3 13 15 16-12 3-15 16-3-13-15-16Q28 15 31 2z" fill="#fcc616" stroke="#fcc616" stroke-width="2" stroke-linejoin="round"/><path d="M59 15q1 7 7 8-6 1-7 8-1-7-7-8 6-1 7-8z" fill="#fcc94a"/><path d="M7 23q1 5 6 6-5 1-6 6-1-5-6-6 5-1 6-6z" fill="#0aa0ee"/><circle cx="51" cy="4" r="3" fill="#f2692e"/><circle cx="74" cy="32" r="3" fill="#8bc541"/></svg></label>
  <button class="tk" style="margin-left:1px" aria-label="Task view"><svg width="22" height="20" fill="none" stroke="#eee" stroke-width="1.500"><path d="M2 1v3h11V1M2 19v-3h11v3M2 6.500h11v7H2zM18 0v4M18 12v8"/><path d="M16.500 8h3" stroke-width="3"/></svg></button>
  <button class="tk run cur" aria-label="Opera"><svg width="30" height="30"><defs><linearGradient id="go"><stop offset="0" stop-color="#f8182c"/><stop offset="1" stop-color="#e8484c"/></linearGradient></defs><path fill-rule="evenodd" fill="url(#go)" d="M15 0a14.500 15 0 1 0 0 30a14.500 15 0 1 0 0-30M15 4c4 0 6.500 5 6.500 11S19 26 15 26 8.500 21 8.500 15 11 4 15 4"/></svg></button>
  <button class="tk" aria-label="Visual Studio"><svg width="32" height="30"><path d="M1 9l4-3 18 16V8L5 25l-4-3v-4l5-3-5-3z" fill="#8e5ad0"/><path d="M22 0l9 4v22l-9 4z" fill="#c48df5"/><path d="M22 0v10L5 25l-3-2z" fill="#7545bb"/></svg></button>
  <button class="tk run" aria-label="Files"><svg width="28" height="25"><path d="M0 2q0-2 2-2h8l3 4H0z" fill="#e09a12"/><rect y="3" width="28" height="20" rx="2" fill="#fdd566"/><path d="M5 25V15q0-2 2-2h14q2 0 2 2v10h-5v-5h-8v5z" fill="#3f9be2"/></svg></button>
  <button class="tk" aria-label="Store"><svg width="30" height="30"><path d="M9 6V3q0-2 2-2h8q2 0 2 2v3" fill="none" stroke="#35a8e8" stroke-width="2"/><path d="M1 6h28v20q0 3-3 3H4q-3 0-3-3z" fill="#f2f2f2"/><path d="M9 12h5.500v5.500H9z" fill="#f25022"/><path d="M15.500 12H21v5.500h-5.500z" fill="#7fba00"/><path d="M9 18.500h5.500V24H9z" fill="#00a4ef"/><path d="M15.500 18.500H21V24h-5.500z" fill="#ffb900"/></svg></button>
  <button class="tk" aria-label="WhatsApp"><svg width="31" height="31"><path d="M16 2a13 13 0 1 1-7 24L2 29l2-8A13 13 0 0 1 16 2z" fill="none" stroke="#28cf64" stroke-width="3"/><path d="M11 8q-3 3 0 7 4 6 9 7 4-1 3-4l-4-2-2 2q-3-1-4-5l1-1-1-4z" fill="#28cf64"/></svg><span class="bdg position-absolute" style="background:#2a2a2a;border:1px solid #999;left:36px;top:24px;height:20px;min-width:20px;font-size:14px">1</span></button>
  <button class="tk run" aria-label="Chrome"><svg width="30" height="30"><circle cx="15" cy="15" r="14.500" fill="#fbc116"/><path d="M2.500 7.500A14.500 14.500 0 0 1 27.500 8H15l-6 10z" fill="#e33b2e"/><path d="M2.500 7.500L9 18q3 4 8 3l-4 8.500A14.500 14.500 0 0 1 2.500 7.500z" fill="#2da94f"/><circle cx="15" cy="15" r="7" fill="#fff"/><circle cx="15" cy="15" r="5.500" fill="#3a7cec"/></svg><span class="bdg position-absolute" style="background:#0f8a72;left:28px;top:23px">S</span></button>
  <button class="tk run" aria-label="Messenger"><svg width="30" height="30" viewBox="0 0 25 25"><path d="M12.500 0a12.500 12 0 1 1-4 23.500L4 25v-4A12.500 12 0 0 1 12.500 0" fill="url(#gm)"/><path d="M5 16l6-7 4 4 5-4-5 7-4-4z" fill="#fff"/></svg><span class="bdg position-absolute" style="background:#f00;left:28px;top:22px;width:19px;height:19px;font-size:13px">3</span></button>
  <button class="tk run" aria-label="Telegram"><svg width="28" height="28"><circle cx="14" cy="14" r="13.500" fill="#2fa3dc"/><path d="M4 14l19-8-3 16-6-4-3 3-1-5 9-7-11 6z" fill="#fff"/></svg><span class="bdg position-absolute rounded-1" style="background:#f23c34;left:29px;top:27px;height:15px;line-height:14px;font-size:10px">..92</span></button>
  <button class="tk run" aria-label="Word"><svg width="30" height="30"><defs><linearGradient id="gd"><stop offset="0" stop-color="#2a55a5"/><stop offset="1" stop-color="#dfe8f6"/></linearGradient></defs><path d="M10 2h18v24H10z" fill="#fff" stroke="#9bb0d4"/><path d="M20 7h6M20 11h6M20 15h6M14 20h12M14 23h12" stroke="#2b4f96" stroke-width="2"/><path d="M3 1h17l-3 17H2z" fill="url(#gd)"/><path d="M2 18h15l-2 8H1z" fill="#7d9bd0"/><text x="7" y="15" font-size="13" font-weight="700" font-style="italic" fill="#1f3f86">W</text></svg></button>

  <div class="tray ms-auto d-flex align-items-center">
    <span style="margin-right:121px;font-size:13px">EN</span>
    <svg width="32" height="28"><defs><linearGradient id="gw" x2="0" y2="1"><stop offset="0" stop-color="#fbc540"/><stop offset="1" stop-color="#f0821a"/></linearGradient></defs><path d="M20 0q10 6 9 16a13 12 0 0 1-26 2q13 3 17-6 2-6 0-12z" fill="url(#gw)"/><path d="M6 6h24M6 11h17M1 16h26M4 21h26" stroke="#ffdf8c" stroke-width="2.500" opacity=".85"/></svg>
    <span class="ms-2" style="font-size:17px;white-space:pre;width:108px">86°F  Haze</span>
    <svg class="ms-2" width="16" height="10" fill="none" stroke="#eee" stroke-width="1.500"><path d="M1 9l7-7 7 7"/></svg>
    <svg style="margin-left:16px" width="16" height="20" fill="none" stroke="#eee" stroke-width="1.300"><rect x="1" y="6" width="9" height="8" rx="1.500"/><path d="M10 9l4-2v6l-4-2M3 3q4-3 8 0M3 17q4 3 8 0"/></svg>
    <div class="text-center" style="line-height:23px;margin-left:13px">8:46 PM<br>9/30/2024</div>
    <svg style="margin-left:23px" width="22" height="22"><path d="M0 1h20v16H9l-3 3v-3H0z" fill="#fff"/><path d="M4 5h12M4 9h12M4 13h7" stroke="#111" stroke-width="1.500"/><circle cx="16" cy="16" r="5" fill="#111"/><path d="M16 11a5 5 0 1 1-4 7q5 0 4-7z" fill="#fff"/></svg>
    <span class="border-start border-secondary" style="height:50px;margin-left:23px;width:6px"></span>
  </div>
</footer>

<script>
// Overlapping ring wallpaper, one tile of 374px; centres are stored at triple scale.
const column = [40,193,350,467,587,705,858,1010].map(y => [3, y]);
const rest = [[154,28],[307,62],[447,50],[612,28],[792,66],[957,66],[375,178],[154,178],[408,280],[540,178],[685,220],[828,220],[957,220],[270,246],[307,372],[117,335],[484,362],[612,340],[792,378],[957,378],[307,490],[154,450],[447,478],[612,455],[792,493],[957,493],[540,572],[690,575],[154,572],[447,598],[828,612],[957,612],[270,648],[447,715],[612,692],[792,730],[957,730],[270,764],[113,738],[307,880],[447,868],[612,846],[754,883],[895,848],[158,883],[998,920],[290,1025],[117,1022],[393,995],[530,992],[844,1033],[695,1033],[957,1050]];
let out = '';
const put = (list, dy) => { for (const [x, y] of list) for (const dx of [-374, 0, 374]) out += `<use href="#ring" x="${Math.round(x / 3) + dx}" y="${Math.round(y / 3) + dy}"/>`; };
for (const dy of [-374, 0, 374]) put(column, dy);
for (const dy of [-374, 0, 374]) put(rest, dy);
document.getElementById('tile').innerHTML = out;
document.querySelectorAll('#papers li').forEach(li => li.insertAdjacentHTML('afterbegin', '<svg width="8" height="12" fill="none" stroke="#444" stroke-width="1.500"><path d="M1 1l5 5-5 5"/></svg>'));
</script>
</body>
</html>
